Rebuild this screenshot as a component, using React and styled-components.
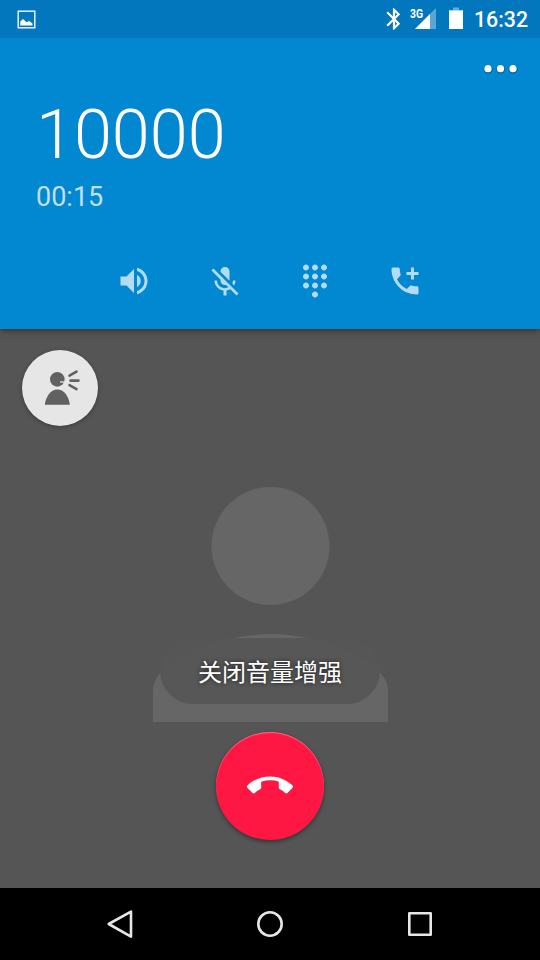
import React from "react";
import styled, { createGlobalStyle } from "styled-components";
import {
	MdVolumeUp,
	MdMicOff,
	MdDialpad,
	MdAddIcCall,
	MdCallEnd,
	MdBluetooth,
} from "react-icons/md";

const GlobalStyle = createGlobalStyle`
	* {
		box-sizing: border-box;
	}
	body {
		margin: 0px;
		background-color: #000000;
		font-family: Roboto, "Noto Sans CJK SC", sans-serif;
	}
	svg {
		display: block;
		flex-shrink: 0;
	}
`;

const Screen = styled.div`
	width: 540px;
	height: 960px;
	display: flex;
	flex-direction: column;
	overflow: hidden;
`;

const StatusBar = styled.div`
	position: relative;
	z-index: 1;
	height: 38px;
	padding: 0px 12px 0px 17px;
	display: flex;
	align-items: center;
	justify-content: space-between;
	background-color: #0277bd;
	color: #ffffff;
`;

const StatusIcons = styled.div`
	display: flex;
	align-items: center;
`;

const BluetoothIcon = styled(MdBluetooth)`
	margin-right: 3px;
	font-size: 26px;
`;

const Clock = styled.div`
	margin-left: 11px;
	padding-top: 2px;
	font-size: 21.3px;
	font-weight: 500;
	line-height: 24px;
`;

const CallHeader = styled.div`
	position: relative;
	height: 291px;
	display: flex;
	flex-direction: column;
	background-color: #0288d1;
	color: #ffffff;
	box-shadow: 0px 1px 7px rgba(0, 0, 0, 0.5);
`;

const MenuButton = styled.button`
	margin: 23px 19px 0px auto;
	padding: 0px;
	height: 16px;
	border: none;
	background: none;
`;

const Number = styled.h1`
	margin: 18px 0px 0px 36px;
	font-size: 68.4px;
	font-weight: 300;
	line-height: 80px;
`;

const Duration = styled.div`
	margin: 6px 0px 0px 36px;
	font-size: 27px;
	line-height: 32px;
	color: rgba(255, 255, 255, 0.75);
`;

const Actions = styled.div`
	margin: 47px 0px 0px 116px;
	display: flex;
	gap: 54.3px;
	color: #b3dbf1;
`;

const ActionButton = styled.button`
	width: 36px;
	height: 40px;
	padding: ${(props) => props.$top || "1px"} 0px 0px ${(props) => props.$left || "0px"};
	border: none;
	background: none;
	color: inherit;
	font-size: 36px;
`;

const Body = styled.div`
	position: relative;
	flex: 1;
	padding-top: 21px;
	display: flex;
	flex-direction: column;
	align-items: center;
	background-color: #555555;
	z-index: -1;
`;

const BoostButton = styled.button`
	align-self: flex-start;
	width: 76px;
	height: 76px;
	margin-top: 0.4px;
	margin-left: 22px;
	padding: 0px;
	border: none;
	border-radius: 50%;
	background-color: #e6e6e6;
	box-shadow: 0px 1px 4px rgba(0, 0, 0, 0.35);
`;

const Avatar = styled.svg`
	margin-top: 60.6px;
	margin-left: 1px;
`;

const Toast = styled.div`
	position: absolute;
	top: 309px;
	left: 160px;
	width: 220px;
	height: 66px;
	border-radius: 33px;
	display: flex;
	align-items: center;
	justify-content: center;
	background-color: rgba(86, 86, 86, 0.96);
	color: #ffffff;
	font-family: "Noto Sans CJK SC", sans-serif;
	font-size: 24px;
	line-height: 36px;
	text-shadow: 0px 0px 4px rgba(0, 0, 0, 0.75);
`;

const EndButton = styled.button`
	width: 108px;
	height: 108px;
	margin-top: 10px;
	padding: 0px;
	border: none;
	border-radius: 50%;
	display: flex;
	align-items: center;
	justify-content: center;
	background-color: #ff1744;
	box-shadow: 0px 2px 4px rgba(0, 0, 0, 0.4),
		inset 0px 1px 1px rgba(255, 255, 255, 0.35);
	color: #ffffff;
	font-size: 46px;
`;

const NavBar = styled.div`
	height: 72px;
	padding: 0px 102px;
	display: flex;
	align-items: center;
	justify-content: space-between;
	background-color: #000000;
`;

function PictureIcon() {
	return (
		<svg width="19" height="19" viewBox="0 0 19 19">
			<rect x="1.2" y="1.2" width="16.6" height="16.6" fill="none" stroke="#e6f1f8" strokeWidth="1.5" />
			<path d="M3.3 15.5v-4l2.7-2.500 3.500 3.300 2.700-1.300 3.300 2.500v2z" fill="#ffffff" />
		</svg>
	);
}

function SignalIcon() {
	return (
		<svg width="39" height="24" viewBox="0 0 39 24">
			<path d="M26 1v21H5z" fill="#ffffff" opacity="0.35" />
			<path d="M20 7v15H5z" fill="#ffffff" />
			<text x="0" y="10.5" fontSize="12" fontWeight="700" textLength="13" lengthAdjust="spacingAndGlyphs" fill="#ffffff">
				3G
			</text>
		</svg>
	);
}

function BatteryIcon() {
	return (
		<svg width="14" height="24" viewBox="0 0 14 24">
			<path d="M4 0.500h6v2.500h4v1H0V3h4z" fill="#ffffff" opacity="0.4" />
			<path d="M0 3.500h14v18.500H0z" fill="#ffffff" />
		</svg>
	);
}

function MenuIcon() {
	return (
		<svg width="40" height="16" viewBox="0 0 40 16">
			<g fill="#01598a" opacity="0.6">
				<circle cx="7.2" cy="8.3" r="4.5" />
				<circle cx="19.7" cy="8.3" r="4.5" />
				<circle cx="32.2" cy="8.3" r="4.5" />
			</g>
			<g fill="#ffffff">
				<circle cx="7" cy="7.7" r="3.6" />
				<circle cx="19.5" cy="7.7" r="3.6" />
				<circle cx="32" cy="7.7" r="3.6" />
			</g>
		</svg>
	);
}

function TalkingIcon() {
	return (
		<svg width="76" height="76" viewBox="22 350.6 76 76">
			<circle cx="57.3" cy="380" r="7.3" fill="#616161" />
			<path d="M60 382.6h5" stroke="#e6e6e6" strokeWidth="1.3" />
			<path d="M44.8 405.3c.8-7.5 5.6-15.3 12.6-15.3s11.8 7.8 12.4 15.3z" fill="#616161" />
			<path
				d="M69.5 376.3l7-4M70.5 381.200h8M69.500 385.700l7 4"
				stroke="#616161"
				strokeWidth="2.6"
				strokeLinecap="round"
			/>
		</svg>
	);
}

function InCallScreen() {
	return (
		<Screen>
			<StatusBar>
				<PictureIcon />
				<StatusIcons>
					<BluetoothIcon />
					<SignalIcon />
					<BatteryIcon />
					<Clock>16:32</Clock>
				</StatusIcons>
			</StatusBar>
			<CallHeader>
				<MenuButton>
					<MenuIcon />
				</MenuButton>
				<Number>10000</Number>
				<Duration>00:15</Duration>
				<Actions>
					<ActionButton>
						<MdVolumeUp />
					</ActionButton>
					<ActionButton $top="3px" $left="1px">
						<MdMicOff />
					</ActionButton>
					<ActionButton>
						<MdDialpad />
					</ActionButton>
					<ActionButton>
						<MdAddIcCall />
					</ActionButton>
				</Actions>
			</CallHeader>
			<Body>
				<BoostButton>
					<TalkingIcon />
				</BoostButton>
				<Avatar width="236" height="235" viewBox="0 0 236 235" fill="#666666">
					<circle cx="117.5" cy="59" r="59" />
					<path d="M0 235v-32C0 174 67 147 117.5 147S235 174 235 203v32z" />
				</Avatar>
				<Toast>关闭音量增强</Toast>
				<EndButton>
					<MdCallEnd />
				</EndButton>
			</Body>
			<NavBar>
				<svg width="36" height="36" viewBox="0 0 36 36" fill="none" stroke="#e6e6e6" strokeWidth="2.6" strokeLinejoin="round">
					<path d="M6.7 18L29 5.600v25z" />
				</svg>
				<svg width="36" height="36" viewBox="0 0 36 36" fill="none" stroke="#e6e6e6" strokeWidth="2.6">
					<circle cx="18" cy="18" r="11.7" />
				</svg>
				<svg width="36" height="36" viewBox="0 0 36 36" fill="none" stroke="#e6e6e6" strokeWidth="2.6" strokeLinejoin="round">
					<rect x="7.3" y="7.3" width="21.4" height="21.4" />
				</svg>
			</NavBar>
		</Screen>
	);
}

export default function App() {
	return (
		<>
			<GlobalStyle />
			<InCallScreen />
		</>
	);
}
